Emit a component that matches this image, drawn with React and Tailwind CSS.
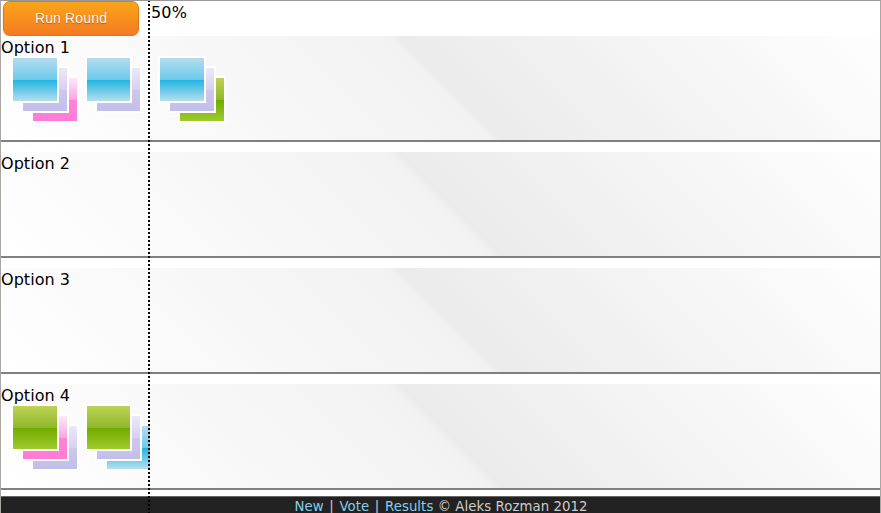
const tileFill = {
  blue: 'bg-[linear-gradient(to_bottom,#b4ddee_0%,#6ccbec_50%,#21b4e2_51%,#b7deed_100%)]',
  lilac: 'bg-[linear-gradient(to_bottom,#ebe9f9_0%,#d8d0ef_50%,#cec7ec_51%,#c1bfea_100%)]',
  pink: 'bg-[linear-gradient(to_bottom,#fbe9f9_0%,#f9a6e0_50%,#ff83d6_51%,#ff7bd8_100%)]',
  green: 'bg-[linear-gradient(to_bottom,#bfd255_0%,#8eb92a_50%,#72aa00_51%,#9ecb2d_100%)]',
};

const tileSpot = ['left-0 top-0 z-30', 'left-[10px] top-[10px] z-20', 'left-[20px] top-[20px] z-10'];

const options = [
  { name: 'Option 1', ballots: [['blue', 'lilac', 'pink'], ['blue', 'lilac'], ['blue', 'lilac', 'green']] },
  { name: 'Option 2', ballots: [] },
  { name: 'Option 3', ballots: [] },
  { name: 'Option 4', ballots: [['green', 'pink', 'lilac'], ['green', 'lilac', 'blue']] },
];

const ballotSize = ['w-[74px] [--tile:48px]', 'w-[73px] [--tile:47px]', 'w-[74px] [--tile:48px]'];

function Ballot({ tiles, index, clipped }) {
  return (
    <div className={`relative isolate h-[68px] shrink-0 ${ballotSize[index]}`}>
      <div className={`absolute left-0 top-0 h-[68px] ${clipped ? 'w-[65px] overflow-hidden' : 'w-[74px]'}`}>
        {tiles.map((color, i) => (
          <div key={i} className={`absolute h-[47px] w-[var(--tile)] border-2 border-white bg-clip-padding bg-origin-padding ${tileSpot[i]} ${tileFill[color]}`} />
        ))}
      </div>
    </div>
  );
}

function OptionRow({ name, ballots }) {
  return (
    <section className="mb-[10px] h-[106px] border-b-2 border-[#808080] bg-[linear-gradient(45deg,#ffffff_0%,#f2f2f2_50%,#ebebeb_51%,#fefefe_100%)] bg-origin-border">
      <h2 className="h-5 pt-px leading-[21px] tracking-[0.05px]">{name}</h2>
      <div className="flex pl-[10px]">
        {ballots.map((tiles, i) => (
          <Ballot key={i} tiles={tiles} index={i} clipped={name === 'Option 4' && i === 1} />
        ))}
      </div>
    </section>
  );
}

export default function App() {
  return (
    <div className="relative flex h-[513px] w-[881px] flex-col overflow-hidden border-x border-t border-x-[#aaa6a2] border-t-[#999] bg-white font-['DejaVu_Sans',sans-serif] text-[16px] text-black">
      <header className="flex h-[35px] shrink-0 pl-[2px]">
        <button className="h-[35px] w-[136px] rounded-[7px] border border-[#da7c0c] bg-linear-to-b from-[#faa51a] to-[#f47a20] font-['Liberation_Sans',sans-serif] text-[14px] leading-[33px] tracking-[0.15px] text-[#fef4e9] shadow-[0_1px_2px_rgba(0,0,0,0.2)] [text-shadow:0_1px_1px_rgba(0,0,0,0.3)]">
          Run Round
        </button>
        <span className="ml-[12px] pt-px leading-[21px] tracking-[0.15px]">50%</span>
      </header>
      <main className="h-[460px] shrink-0 overflow-hidden">
        {options.map((option) => (
          <OptionRow key={option.name} {...option} />
        ))}
      </main>
      <footer className="-mx-px h-[17px] shrink-0 border-t border-[#666] bg-[#222] pl-px text-center text-[13.3px] leading-[20px] tracking-[0.06px] text-[#ccc]">
        <a className="text-[#87ceeb]">New</a> <span className="mx-[1.3px]">|</span> <a className="text-[#87ceeb]">Vote</a> <span className="mx-[1.3px]">|</span> <a className="text-[#87ceeb]">Results</a> © Aleks Rozman 2012
      </footer>
      <div className="absolute left-[147px] top-[-1px] z-40 h-[522px] border-l-2 border-dotted border-black" />
    </div>
  );
}
